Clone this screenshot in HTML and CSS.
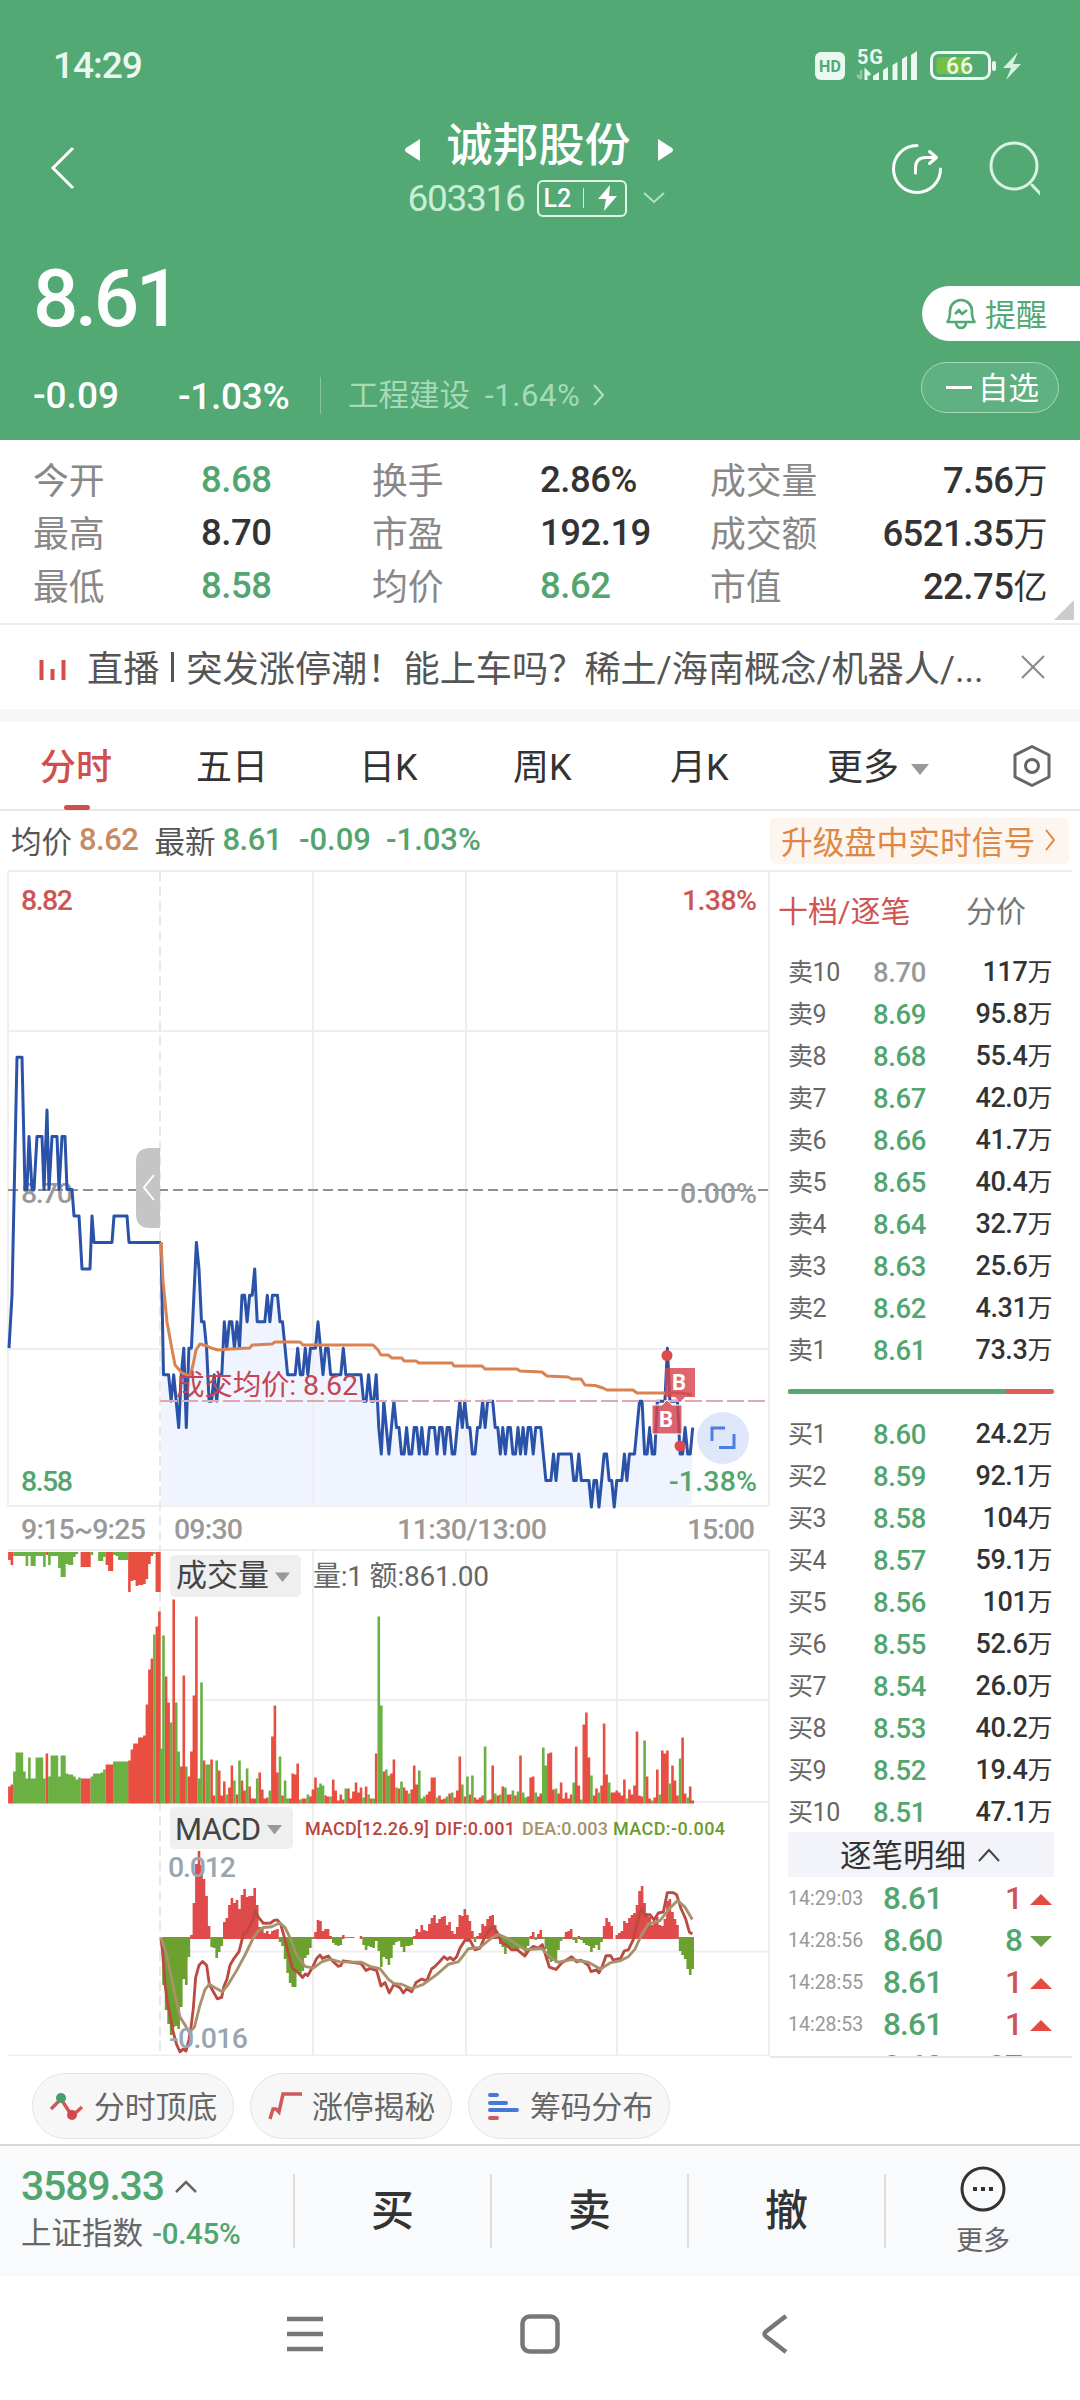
FILE: index.html
```html
<!DOCTYPE html>
<html lang="zh-CN">
<head>
    <meta charset="UTF-8">
    <meta name="viewport" content="width=device-width, initial-scale=1.0">
    <title>诚邦股份 603316</title>
    <link rel="stylesheet" href="styles.css">
</head>
<body>
    <header class="header">
        <div class="status-bar">
            <span class="clock">14:29</span>
            <svg class="status-icons" width="210" height="40" viewBox="0 -3 210 40">
                <rect x="0" y="3" width="30" height="28" rx="6" fill="#eaf8ef"/>
                <text x="4" y="22.5" class="hd" textLength="22">HD</text>
                <text x="42" y="15" class="net" textLength="26">5G</text>
                <path d="M46 21v9M46 30l-4-4" stroke="#8fcaa6" stroke-width="2.500" fill="none"/>
                <path d="M51 31v-9l4 4" stroke="#eaf8ef" stroke-width="3" fill="none"/>
                <path d="M58 31v-4l6-4v8zM68 31V21l5-3v13zM77.500 31V16l5-3v18zM87 31V10l5-3v24zM96 31V6l6-4v29z" fill="#eaf8ef"/>
                <rect x="116.500" y="3.500" width="58" height="26" rx="7" fill="none" stroke="#eaf8ef" stroke-width="3"/>
                <rect x="121.500" y="8" width="32" height="17" rx="3" fill="#74c043"/>
                <rect x="177" y="12" width="4" height="10" rx="2" fill="#eaf8ef"/>
                <text x="131" y="24.500" class="battery" textLength="27">66</text>
                <path d="M203 3 188 19h8l-5 12 15-16h-8z" fill="#d7f1e0"/>
            </svg>
        </div>

        <div class="title-bar">
            <svg class="back" width="30" height="46" viewBox="0 0 30 46"><path d="M25 3 5 23l20 20" fill="none" stroke="#fff" stroke-width="3"/></svg>
            <div class="title">
                <div class="title-name">
                    <svg width="17" height="24" viewBox="0 0 17 24"><path d="M16 1v22L2 14q-2-2 0-4z" fill="#fff"/></svg>
                    <span>诚邦股份</span>
                    <svg width="17" height="24" viewBox="0 0 17 24"><path d="M1 1v22l14-9q2-2 0-4z" fill="#fff"/></svg>
                </div>
                <div class="title-code">
                    <span class="code">603316</span>
                    <span class="level">L2<i></i><svg width="20" height="26" viewBox="0 0 20 26"><path d="M12 0 0 14h8L6 26l13-15h-8z" fill="#fff"/></svg></span>
                    <svg width="24" height="14" viewBox="0 0 24 14"><path d="m2 2 10 9L22 2" fill="none" stroke="#b5e0c4" stroke-width="2"/></svg>
                </div>
            </div>
            <svg class="tools" width="160" height="60" viewBox="0 0 160 60">
                <g fill="none" stroke-linecap="round" stroke-linejoin="round">
                    <path d="M37 7.500a23.500 23.500 0 1 0 23.500 23.500M35.500 35v-5q0-10.500 10.500-10.500h9.500M49.500 13.500l7 6-7 6" stroke="#fff" stroke-width="3"/>
                    <circle cx="134" cy="28" r="23" stroke="#d9f2e2" stroke-width="3"/>
                    <path d="m152 47 8.500 9" stroke="#d9f2e2" stroke-width="3"/>
                </g>
            </svg>
        </div>

        <div class="summary">
            <div>
                <div class="price">8.61</div>
                <div class="change">
                    <span class="change-value">-0.09</span>
                    <span class="change-rate">-1.03%</span>
                    <span class="sector">工程建设</span>
                    <span class="sector-rate">-1.64%</span>
                    <svg width="14" height="22" viewBox="0 0 14 22"><path d="m2 1 9 10-9 10" fill="none" stroke="#b5e0c4" stroke-width="2"/></svg>
                </div>
            </div>
            <div class="actions">
                <div class="remind">
                    <svg width="30" height="32" viewBox="0 0 30 32" fill="none" stroke="#52a974" stroke-width="2.600" stroke-linejoin="round"><path d="M4 16v-3a11 11 0 0 1 22 0v3q0 4 2.500 8H1.500Q4 20 4 16zM10 25q1 5 5 5t5-5M9 16l4-4 3 4 5-4"/></svg>
                    <span>提醒</span>
                </div>
                <div class="watch"><i></i><span>自选</span></div>
            </div>
        </div>
    </header>

    <section class="stats">
        <span class="label">今开</span><span class="down">8.68</span>
        <span class="label">换手</span><span>2.86%</span>
        <span class="label">成交量</span><span class="right">7.56<b>万</b></span>
        <span class="label">最高</span><span>8.70</span>
        <span class="label">市盈</span><span>192.19</span>
        <span class="label">成交额</span><span class="right">6521.35<b>万</b></span>
        <span class="label">最低</span><span class="down">8.58</span>
        <span class="label">均价</span><span class="down">8.62</span>
        <span class="label">市值</span><span class="right">22.75<b>亿</b></span>
    </section>

    <section class="news">
        <svg width="28" height="20" viewBox="0 0 28 20"><path d="M2.500 0v20M13.500 9v11M24.500 0v20" stroke="#d34d4d" stroke-width="4"/></svg>
        <p>直播 <i></i> 突发涨停潮！能上车吗？稀土/海南概念/机器人/...</p>
        <svg width="26" height="26" viewBox="0 0 26 26"><path d="m2 2 22 22M24 2 2 24" stroke="#8c8c8c" stroke-width="2.200"/></svg>
    </section>

    <nav class="tabs">
        <span class="tab active">分时</span>
        <span class="tab">五日</span>
        <span class="tab">日K</span>
        <span class="tab">周K</span>
        <span class="tab">月K</span>
        <span class="tab">更多<i class="caret"></i></span>
        <svg width="40" height="44" viewBox="0 0 40 44" fill="none" stroke="#666" stroke-width="3" stroke-linejoin="round"><path d="M20 2.500 37 11v22l-17 8.500L3 33V11z"/><circle cx="20" cy="22" r="6.500"/></svg>
    </nav>

    <div class="quote-line">
        <span>均价</span><span class="num avg">8.62</span>
        <span class="latest">最新</span><span class="num down">8.61</span>
        <span class="num down diff">-0.09</span><span class="num down rate">-1.03%</span>
        <div class="upgrade"><span>升级盘中实时信号</span><svg width="12" height="22" viewBox="0 0 12 22"><path d="m2 1 8 10-8 10" fill="none" stroke="#dd8844" stroke-width="2"/></svg></div>
    </div>

    <main class="market">
        <svg class="chart" width="770" height="1186" viewBox="0 870 770 1186">
            <!-- grid -->
            <g class="grid">
                <path d="M8 871H770M8 1031H769M8 1349H769M8 1506H769M8 871V1506M313 871V1506M466 871V1506M617 871V1506M769 871V1506"/>
                <path d="M8 1550H769M160 1700H769M466 1802H769M160 1951.500H769M313 1550V2055M466 1550V2055M617 1550V2055M769 1550V2055M8 2055.500H770"/>
                <path class="dashed" d="M160 871V2055"/>
            </g>

            <path id="area" fill="#eff4fe"/>
            <path class="grid" d="M313 1300V1506M466 1300V1506M617 1300V1506"/>
            <path d="M8 1190H769" stroke="#8f8f8f" stroke-width="2" stroke-dasharray="10 5"/>
            <text x="21" y="1203" class="axis" textLength="52">8.70</text>
            <text x="680" y="1203" class="axis" textLength="77">0.00%</text>
            <polyline id="preLine" class="price-line"/>
            <polyline id="priceLine" class="price-line"/>
            <path d="M160 1401H769" stroke="#dfa9af" stroke-width="2" stroke-dasharray="17 4"/>
            <polyline class="avg-line" points="161,1242 163,1281 167,1322 171,1344 175,1365 182,1373 190,1376 193,1365 196,1350 200,1344 207,1346 211,1348 218,1350 230,1349 250,1348 252,1345 272,1344 275,1342 300,1342 303,1345 373,1345 378,1350 381,1355 388,1355 392,1358 402,1358 404,1361 416,1361 419,1363 452,1363 454,1366 482,1366 485,1369 517,1369 520,1371 542,1372 547,1376 568,1377 572,1379 581,1379 585,1385 595,1385.500 603,1388 607,1390 633,1390 637,1393 682,1393 692,1395"/>

            <text x="21" y="910" class="axis up" textLength="52">8.82</text>
            <text x="682" y="910" class="axis up" textLength="75">1.38%</text>
            <text x="21" y="1491" class="axis down" textLength="52">8.58</text>
            <text x="669" y="1491" class="axis down" textLength="88">-1.38%</text>
            <text x="176" y="1395" class="cost" textLength="182">成交均价: 8.62</text>

            <!-- pre-open panel handle -->
            <path d="M160 1148h-10q-14 0-14 14v52q0 14 14 14h10z" fill="#c5c5c5"/>
            <path d="m154 1175-10 12.500 10 12.500" fill="none" stroke="#fff" stroke-width="2"/>

            <!-- buy markers -->
            <circle cx="667" cy="1355.500" r="5.500" fill="#dc4a4c"/>
            <circle cx="680" cy="1446" r="5.500" fill="#dc4a4c"/>
            <path d="M665 1368h30v29h-10l-5 5-5-5h-10z" fill="#d8444e" fill-opacity=".82"/>
            <path d="M652 1434v-29h10l5-5 5 5h10v29z" fill="#d8444e" fill-opacity=".82" stroke="#fff" stroke-width="1"/>
            <text x="672" y="1390" class="mark">B</text>
            <text x="659" y="1427" class="mark">B</text>

            <circle cx="723" cy="1438" r="26" fill="#dfe7fb"/>
            <path d="M712 1441v-13h13M734 1434v13.500h-15" fill="none" stroke="#4e7fe0" stroke-width="3"/>

            <text x="21" y="1539" class="axis" textLength="125">9:15~9:25</text>
            <text x="174" y="1539" class="axis" textLength="69">09:30</text>
            <text x="397" y="1539" class="axis" textLength="150">11:30/13:00</text>
            <text x="687" y="1539" class="axis" textLength="68">15:00</text>

            <!-- volume -->
            <path id="preUp" class="bar-up"/>
            <path id="preDown" class="bar-down"/>
            <path id="volUp" class="bar-up"/>
            <path id="volDown" class="bar-down"/>
            <rect x="170" y="1555" width="131" height="42" rx="5" fill="#efefef"/>
            <text x="176" y="1586" class="picker" textLength="93">成交量</text>
            <path d="M275 1572.500h15l-7.500 9.500z" fill="#999"/>
            <text x="313" y="1586" class="volume-info" textLength="176">量:1 额:861.00</text>

            <!-- macd -->
            <path id="macdUp" class="bar-up macd"/>
            <path id="macdDown" class="bar-down macd"/>
            <g transform="translate(0 1540) scale(.33333 .34439)">
                <polyline class="dif" points="483,1155 488,1200 495,1290 503,1345 513,1395 520,1430 530,1465 540,1486 550,1478 558,1484 567,1450 573,1415 580,1360 587,1270 597,1235 608,1224 620,1235 628,1290 640,1312 652,1332 665,1328 672,1295 681,1275 690,1235 700,1218 717,1195 725,1165 732,1140 742,1138 750,1120 760,1100 766,1078 775,1095 790,1113 812,1112 822,1105 832,1103 842,1115 855,1160 865,1200 878,1245 893,1255 908,1270 916,1260 923,1265 938,1240 950,1215 960,1205 967,1215 985,1208 995,1220 1015,1238 1022,1236 1030,1222 1060,1227 1083,1230 1098,1250 1110,1244 1130,1250 1143,1295 1155,1285 1168,1315 1182,1290 1190,1295 1200,1300 1210,1315 1220,1303 1235,1312 1248,1285 1265,1275 1280,1280 1295,1245 1303,1240 1315,1228 1332,1210 1342,1218 1350,1212 1360,1220 1370,1210 1380,1185 1395,1162 1410,1162 1425,1190 1440,1185 1455,1150 1478,1122 1492,1140 1505,1170 1518,1175 1535,1190 1552,1190 1575,1208 1587,1190 1600,1180 1615,1185 1627,1175 1640,1215 1648,1240 1668,1247 1685,1228 1715,1210 1730,1225 1743,1220 1765,1235 1773,1253 1790,1248 1797,1257 1808,1235 1818,1207 1832,1207 1840,1220 1852,1217 1862,1215 1873,1193 1885,1190 1900,1160 1915,1100 1925,1070 1935,1090 1950,1088 1962,1103 1975,1083 1990,1080 2002,1024 2020,1024 2030,1030 2043,1070 2057,1100 2068,1138 2077,1144"/>
                <polyline class="dea" points="483,1155 497,1195 510,1250 525,1320 540,1385 553,1405 568,1430 583,1415 600,1350 615,1305 628,1290 645,1300 667,1312 685,1290 710,1250 735,1205 760,1155 775,1135 790,1125 815,1123 838,1112 855,1125 870,1155 890,1205 915,1238 940,1243 965,1225 990,1217 1020,1225 1085,1226 1110,1238 1140,1245 1165,1275 1182,1288 1200,1290 1205,1290 1235,1303 1270,1290 1310,1262 1345,1232 1375,1225 1405,1187 1440,1183 1475,1155 1495,1145 1525,1158 1575,1190 1625,1186 1650,1210 1675,1226 1715,1218 1765,1226 1802,1246 1830,1228 1860,1222 1885,1210 1905,1188 1925,1145 1945,1115 1980,1105 2010,1068 2033,1047 2055,1066 2077,1102"/>
            </g>
            <rect x="170" y="1807" width="123" height="42" rx="5" fill="#efefef"/>
            <text x="175" y="1840" class="picker" textLength="86">MACD</text>
            <path d="M267 1825h15l-7.500 9.500z" fill="#999"/>
            <text x="305" y="1835" class="legend" fill="#b8463f" textLength="124">MACD[12.26.9]</text>
            <text x="435" y="1835" class="legend" fill="#b8463f" textLength="80">DIF:0.001</text>
            <text x="522" y="1835" class="legend" fill="#a5916b" textLength="86">DEA:0.003</text>
            <text x="613" y="1835" class="legend" fill="#6b9b2f" textLength="112">MACD:-0.004</text>
            <text x="168" y="1877" class="scale" textLength="68">0.012</text>
            <text x="169" y="2048" class="scale" textLength="79">-0.016</text>
        </svg>

        <aside class="book">
            <div class="book-tabs"><span class="active">十档/逐笔</span><span>分价</span></div>
            <div id="asks"></div>
            <div class="ratio"><i></i></div>
            <div id="bids"></div>
            <div class="detail-title"><span>逐笔明细</span><svg width="22" height="14" viewBox="0 0 22 14"><path d="m1 13 10-11 10 11" fill="none" stroke="#444" stroke-width="2"/></svg></div>
            <div id="ticks"></div>
        </aside>
    </main>

    <div class="chips">
        <div class="chip">
            <svg width="36" height="30" viewBox="0 0 36 30"><path d="m2 18 10-10 11 17 10-9" fill="none" stroke="#d2595b" stroke-width="3.500"/><circle cx="12" cy="7" r="5" fill="#459f68"/><circle cx="23" cy="24" r="5" fill="#d2494b"/></svg>
            <span>分时顶底</span>
        </div>
        <div class="chip">
            <svg width="36" height="30" viewBox="0 0 36 30"><path d="M3 28 6 18h3l3 3L16 3h19" fill="none" stroke="#d2595b" stroke-width="3.500"/></svg>
            <span>涨停揭秘</span>
        </div>
        <div class="chip">
            <svg width="36" height="30" viewBox="0 0 36 30" stroke-width="4" stroke-linecap="round"><path d="M5 4h7M5 12h16M5 19h27" stroke="#4777d9"/><path d="M5 27h7" stroke="#d2595b"/></svg>
            <span>筹码分布</span>
        </div>
    </div>

    <footer class="trade-bar">
        <div class="index">
            <div class="index-value">3589.33<svg width="24" height="14" viewBox="0 0 24 14"><path d="m2 12 10-10 10 10" fill="none" stroke="#666" stroke-width="2.500"/></svg></div>
            <div class="index-name">上证指数<span>-0.45%</span></div>
        </div>
        <div class="trade">买</div>
        <div class="trade">卖</div>
        <div class="trade">撤</div>
        <div class="more">
            <svg width="48" height="48" viewBox="0 0 48 48"><circle cx="24" cy="24" r="21" fill="none" stroke="#333" stroke-width="3"/><path d="M14 24h4M22 24h4M30 24h4" stroke="#333" stroke-width="4"/></svg>
            <span>更多</span>
        </div>
    </footer>

    <div class="system-nav">
        <svg width="36" height="36" viewBox="0 0 36 36"><path d="M0 3h36M0 18h36M0 33h36" stroke="#777" stroke-width="4.500"/></svg>
        <svg width="40" height="40" viewBox="0 0 40 40"><rect x="2.500" y="2.500" width="35" height="35" rx="7" fill="none" stroke="#777" stroke-width="4.500"/></svg>
        <svg width="28" height="40" viewBox="0 0 28 40"><path d="M25 2 5 17.500q-3 2.500 0 5L25 38" fill="none" stroke="#777" stroke-width="4.500"/></svg>
    </div>

    <script>
        // Minute prices in cents above 8.00
        var prices = [
            68,63,63,63,62,63,62,61,63,64,61,64,64,66,68,67,65,65,64,62,62,63,62,63,63,65,64,65,65,64,
            65,64,66,66,65,66,66,67,65,65,65,65,66,65,66,66,66,65,65,64,63,63,63,63,64,63,63,64,63,64,
            64,64,65,64,63,64,64,63,63,63,63,63,64,63,63,63,63,63,63,63,62,62,63,62,62,63,61,60,62,61,
            60,61,62,61,61,60,60,61,60,60,61,61,60,61,60,60,61,61,61,60,61,61,60,61,61,60,60,61,62,61,
            62,61,61,60,60,61,61,62,61,62,62,62,61,61,60,61,60,61,61,60,60,61,60,61,60,61,61,60,61,61,
            61,60,59,59,59,60,59,60,60,60,60,60,60,59,59,60,59,59,59,59,58,59,59,58,59,60,60,59,59,58,
            59,59,59,60,59,60,60,60,61,62,62,60,60,61,60,60,62,62,62,62,64,62,62,62,62,60,60,61,60,60,61
        ];
        // Call auction: x, price
        var auction = [
            [9,64],[12,66],[17,75],[22,75],[25,70],[27,70],[29,72],[32,70],[34,70],[37,72],[42,72],[44,70],
            [47,73],[49,70],[52,72],[57,72],[59,70],[62,72],[65,72],[67,70],[72,70],[74,69],[79,69],[82,67],
            [90,67],[92,69],[94,68],[112,68],[114,69],[127,69],[129,68],[161,68]
        ];
        // Bars: positive is red, negative is green
        var auctionVolume = [
            17,19,-32,-51,-51,-51,-32,-25,-46,-25,-25,-46,-46,-46,-25,50,-27,-48,-48,-48,-27,-48,-48,-30,-29,-29,-27,-24,-26,
            25,25,25,25,-27,-30,-30,-30,-31,-34,39,39,39,-42,-42,-42,-42,-42,-42,43,54,60,60,66,66,68,99,134,145,-169,177,192
        ];
        var auctionUnmatched = [
            8,13,-4,-4,-4,-4,-4,-14,-4,-14,-14,-4,-4,-4,-15,3,-13,-4,-4,-4,-16,-25,-25,-12,-13,-13,-5,-2,0,
            15,15,15,15,-3,0,0,-9,-9,-5,13,19,19,-3,-4,-8,-8,-8,-8,40,29,28,34,33,33,32,27,12,4,-2,40,40
        ];
        var volume = [
            -55,-168,127,101,-81,204,-101,-52,37,128,-37,27,52,108,187,-25,-121,43,-39,-39,44,8,-43,33,8,22,-9,16,38,-23,
            9,-43,23,13,-35,17,5,5,-25,31,14,5,6,-13,67,98,31,-47,8,-23,-5,5,30,29,40,-4,5,5,-9,7,
            14,26,-16,-20,-18,8,7,-7,24,13,3,9,4,-15,15,5,12,21,11,16,-6,17,-9,5,-5,50,-187,-98,32,-34,
            -28,30,44,-16,15,-22,16,13,-10,14,38,19,-33,-5,-7,9,12,26,26,-6,8,4,5,-7,10,-11,6,13,47,-19,
            7,-27,9,-28,6,4,6,8,-57,3,4,38,-10,8,-9,17,-16,9,9,-13,8,-12,48,-11,-6,7,26,27,-11,7,
            10,-56,-38,50,51,14,-15,10,21,5,11,5,9,-21,57,18,-4,79,91,46,-28,8,15,-11,18,80,29,-21,11,11,
            13,11,8,24,-5,14,9,18,72,8,7,-63,27,5,-3,6,34,-9,53,50,53,-20,38,23,8,-45,66,10,-6,17,3
        ];
        var macd = [
            0,-48,-73,-87,-98,-90,-89,-92,-70,-42,-48,-20,4,36,75,88,74,60,43,13,-10,-11,-21,-15,-9,17,21,34,41,36,
            39,30,44,50,42,43,43,51,34,12,10,6,8,5,8,9,10,-5,-9,-22,-36,-46,-50,-50,-34,-38,-34,-21,-18,-11,
            -2,7,19,18,8,10,10,3,-6,-8,-9,-8,4,-1,-1,-1,-1,0,0,3,-8,-13,-9,-10,-11,-4,-14,-30,-20,-22,
            -28,-21,-8,-5,-4,-10,-15,-9,-9,-8,3,10,7,14,9,8,15,21,24,16,20,22,23,14,17,8,5,12,24,23,
            30,24,18,8,-5,3,6,15,13,20,23,24,14,5,-7,-10,-17,-10,-12,-14,-12,-14,-11,-12,-17,-9,3,7,-3,5,
            9,-2,-12,-22,-25,-24,-26,-13,-4,2,7,8,10,-3,-6,3,-3,-6,-8,-9,-15,-11,-8,-13,-5,13,21,17,13,0,
            4,6,8,18,16,21,24,26,34,48,53,36,26,22,14,16,22,14,13,20,38,40,27,20,14,-14,-18,-22,-32,-38,-32
        ];

        function priceY(cents) {
            return 1507 - (cents - 58) * 26.46;
        }

        function minuteX(i) {
            return 161 + i * 2.532;
        }

        function auctionX(i) {
            return 9.4 + i * 2.5;
        }

        // One path holds all the bars of a colour
        function bars(values, x, base, dir, sign) {
            var d = '';
            values.forEach(function(v, i) {
                if (v * sign > 0) {
                    d += 'M' + x(i).toFixed(1) + ' ' + base + 'v' + (dir * Math.abs(v));
                }
            });
            return d;
        }

        function setPath(id, d) {
            document.getElementById(id).setAttribute('d', d);
        }

        var points = prices.map(function(p, i) {
            return minuteX(i).toFixed(1) + ',' + priceY(p).toFixed(1);
        });
        document.getElementById('priceLine').setAttribute('points', points.join(' '));
        document.getElementById('preLine').setAttribute('points', auction.map(function(p) {
            return p[0] + ',' + priceY(p[1]).toFixed(1);
        }).join(' '));
        setPath('area', 'M161 1506L' + points.join(' ') + ' 692 1506z');

        setPath('preUp', bars(auctionVolume, auctionX, 1803.5, -1, 1) + bars(auctionUnmatched, auctionX, 1552, 1, 1));
        setPath('preDown', bars(auctionVolume, auctionX, 1803.5, -1, -1) + bars(auctionUnmatched, auctionX, 1552, 1, -1));
        setPath('volUp', bars(volume, minuteX, 1803.5, -1, 1));
        setPath('volDown', bars(volume, minuteX, 1803.5, -1, -1));
        setPath('macdUp', bars(macd, minuteX, 1939, -1, 1));
        setPath('macdDown', bars(macd, minuteX, 1937, 1, -1));

        // Order book
        var asks = [['卖10','8.70','117'],['卖9','8.69','95.8'],['卖8','8.68','55.4'],['卖7','8.67','42.0'],['卖6','8.66','41.7'],
            ['卖5','8.65','40.4'],['卖4','8.64','32.7'],['卖3','8.63','25.6'],['卖2','8.62','4.31'],['卖1','8.61','73.3']];
        var bids = [['买1','8.60','24.2'],['买2','8.59','92.1'],['买3','8.58','104'],['买4','8.57','59.1'],['买5','8.56','101'],
            ['买6','8.55','52.6'],['买7','8.54','26.0'],['买8','8.53','40.2'],['买9','8.52','19.4'],['买10','8.51','47.1']];
        var ticks = [['14:29:03','8.61','1','up'],['14:28:56','8.60','8','down'],['14:28:55','8.61','1','up'],
            ['14:28:53','8.61','1','up'],['','8.60','27','down']];

        function levelRows(levels) {
            return levels.map(function(l) {
                var cls = l[1] === '8.70' ? 'flat' : 'down';
                return '<div class="level-row"><span class="level-name">' + l[0] + '</span><span class="' + cls + '">' + l[1] +
                    '</span><span class="qty">' + l[2] + '<b>万</b></span></div>';
            }).join('');
        }

        document.getElementById('asks').innerHTML = levelRows(asks);
        document.getElementById('bids').innerHTML = levelRows(bids);
        document.getElementById('ticks').innerHTML = ticks.map(function(t) {
            return '<div class="tick-row"><span class="time">' + t[0] + '</span><span class="down">' + t[1] +
                '</span><span class="tick-qty ' + t[3] + '">' + t[2] + '</span><i class="arrow-' + t[3] + '"></i></div>';
        }).join('');
    </script>
</body>
</html>
```
FILE: styles.css
```css
* {
    box-sizing: border-box;
}
body {
    margin: 0;
    width: 1080px;
    height: 2400px;
    overflow: hidden;
    background-color: #fff;
    color: #333;
    font-family: Roboto, 'Noto Sans CJK SC', sans-serif;
    white-space: nowrap;
}
svg {
    display: block;
    flex: none;
}
i {
    font-style: normal;
}
b {
    font-weight: 400;
}
.up {
    color: #cc5555;
    fill: #cc5555;
}
.down {
    color: #52a56f;
    fill: #52a56f;
}

/* Header */
.header {
    height: 440px;
    background-color: #52a974;
    color: #fff;
}
.status-bar {
    display: flex;
    justify-content: space-between;
    align-items: center;
    height: 108px;
    padding: 23px 55px 0 53px;
}
.clock {
    font-size: 37px;
    font-weight: 500;
    letter-spacing: -1px;
    color: #eaf8ef;
}
.hd {
    font-size: 16px;
    font-weight: 700;
    fill: #52a974;
}
.net {
    font-size: 20px;
    font-weight: 700;
    fill: #eaf8ef;
}
.battery {
    font-size: 23px;
    font-weight: 500;
    fill: #eaf8ef;
}
.title-bar {
    display: flex;
    justify-content: space-between;
    align-items: center;
    height: 120px;
    padding: 0 40px 0 48px;
}
.title-bar .back {
    margin-right: 119px;
}
.title-name {
    display: flex;
    justify-content: center;
    align-items: center;
    gap: 26px;
    height: 58px;
    font-size: 46px;
}
.title-name span {
    margin-top: -4px;
    font-weight: 500;
}
.title-name svg {
    margin-top: 14px;
}
.title-code {
    display: flex;
    align-items: center;
    height: 50px;
    padding: 2px 0 0 2px;
}
.code {
    width: 131px;
    padding-left: 2px;
    font-size: 37px;
    letter-spacing: -1.3px;
    color: #c9eed6;
}
.level {
    display: flex;
    align-items: center;
    width: 90px;
    height: 37px;
    margin-right: 15px;
    padding-left: 5px;
    border: 2px solid #e0f5e8;
    border-radius: 6px;
    font-size: 25px;
    font-weight: 500;
}
.level i {
    width: 1px;
    height: 20px;
    margin: 0 14px 0 12px;
    background-color: #d0eedb;
}
.summary {
    display: flex;
    justify-content: space-between;
    padding-left: 33px;
}
.price {
    height: 140px;
    font-size: 80px;
    line-height: 142px;
    font-weight: 500;
    letter-spacing: -3.5px;
}
.change {
    display: flex;
    align-items: center;
    height: 54px;
}
.change-value, .change-rate {
    font-size: 37px;
    font-weight: 500;
}
.change-value {
    width: 145px;
}
.change-rate {
    width: 143px;
    height: 37px;
    line-height: 39px;
    letter-spacing: -0.3px;
    border-right: 1px solid #86c49e;
}
.sector {
    margin: -4px 0 0 27px;
    font-size: 30.5px;
    color: #a6dab8;
}
.sector-rate {
    width: 107px;
    margin: 0 0 0 15px;
    font-size: 31px;
    letter-spacing: 0.6px;
    color: #a6dab8;
}
.actions {
    width: 159px;
    padding-top: 58px;
}
.remind {
    display: flex;
    align-items: center;
    gap: 9px;
    height: 55px;
    margin-left: 1px;
    padding-left: 24px;
    border-radius: 28px 0 0 28px;
    background-color: #fff;
    font-size: 31px;
    color: #52a974;
}
.remind span, .watch span {
    padding-bottom: 3px;
}
.watch {
    display: flex;
    align-items: center;
    gap: 6px;
    width: 138px;
    height: 51px;
    margin-top: 21px;
    padding-left: 24px;
    border: 1px solid #a6dab8;
    border-radius: 26px;
    background-color: #60b181;
    font-size: 30.5px;
}
.watch i {
    width: 26px;
    height: 3px;
    background-color: #fff;
}

/* Key figures */
.stats {
    position: relative;
    display: grid;
    grid-template-columns: 168px 171px 168px 170px 140px 197px;
    grid-auto-rows: 53px;
    align-items: center;
    height: 185px;
    padding: 13px 33px 0;
    border-bottom: 2px solid #eee;
    font-size: 36.5px;
    font-weight: 500;
    letter-spacing: -0.5px;
}
.stats .label {
    padding-bottom: 4px;
    font-size: 35.8px;
    font-weight: 400;
    letter-spacing: 0;
    color: #888;
}
.stats b {
    font-size: 34px;
}
.stats .right {
    padding-bottom: 2px;
    text-align: right;
}
.stats::after {
    content: '';
    position: absolute;
    right: 6px;
    bottom: 3px;
    border: 10px solid transparent;
    border-right-color: #ccc;
    border-bottom-color: #ccc;
}
.news {
    display: flex;
    align-items: center;
    height: 97px;
    padding: 0 34px 0 39px;
    border-bottom: 13px solid #f7f7f7;
}
.news svg:first-child {
    margin-top: 6px;
}
.news p {
    flex: 1;
    margin: 0;
    padding: 0 0 2px 20px;
    font-size: 36.2px;
    color: #555;
}
.news i {
    display: inline-block;
    width: 3px;
    height: 30px;
    margin: 0 3px;
    background-color: #555;
}

/* Chart tabs */
.tabs {
    display: grid;
    grid-template-columns: 156px 163px 154px 157px 157px 185px 40px;
    align-items: center;
    height: 89px;
    padding-left: 40px;
    border-bottom: 2px solid #e8e8e8;
    font-size: 36px;
}
.tab {
    position: relative;
    padding-bottom: 4px;
}
.tab.active {
    font-weight: 500;
    color: #cf4e50;
}
.tab.active::after {
    content: '';
    position: absolute;
    left: 24px;
    bottom: -16px;
    width: 26px;
    height: 5px;
    border-radius: 3px;
    background-color: #cf4e50;
}
.caret {
    display: inline-block;
    margin: 0 0 5px 12px;
    border: 9px solid transparent;
    border-top: 11px solid #999;
    border-bottom: 0;
}
.quote-line {
    display: flex;
    align-items: center;
    height: 59px;
    padding: 0 0 2px 11px;
    font-size: 30.5px;
    color: #555;
}
.quote-line .num {
    margin: 0 0 0 7px;
    font-size: 31px;
    font-weight: 500;
    letter-spacing: -0.5px;
}
.quote-line .avg {
    color: #c98a60;
}
.quote-line .latest {
    margin-left: 16px;
}
.quote-line .diff {
    margin-left: 17px;
    letter-spacing: 0;
}
.quote-line .rate {
    margin-left: 15px;
    letter-spacing: 0;
}
.upgrade {
    display: flex;
    align-items: center;
    gap: 9px;
    width: 299px;
    height: 46px;
    margin: 2px 11px 0 auto;
    padding: 0 0 2px 11px;
    border-radius: 5px;
    background-color: #fdf5ef;
    font-size: 31.8px;
    color: #dd8844;
}

/* Charts */
.market {
    display: flex;
    height: 1188px;
}
.grid {
    fill: none;
    stroke: #eee;
    stroke-width: 2;
}
.grid .dashed {
    stroke: #e8e8e8;
    stroke-dasharray: 10 5;
}
.price-line {
    fill: none;
    stroke: #2a52a8;
    stroke-width: 3;
    stroke-linejoin: round;
}
.avg-line {
    fill: none;
    stroke: #d98252;
    stroke-width: 3;
    stroke-linejoin: round;
}
.axis {
    font-size: 28.5px;
    font-weight: 500;
    fill: #999;
}
.axis.up {
    fill: #cc5555;
}
.axis.down {
    fill: #52a56f;
}
.cost {
    font-size: 28.5px;
    fill: #c4454f;
}
.mark {
    font-size: 22px;
    font-weight: 700;
    fill: #fff;
}
.bar-up, .bar-down {
    fill: none;
    stroke-width: 2.6;
}
.bar-up {
    stroke: #e84f40;
}
.bar-down {
    stroke: #6ab043;
}
.bar-up.macd {
    stroke: #df4b4b;
}
.bar-down.macd {
    stroke: #6ca02f;
}
.dif, .dea {
    fill: none;
    stroke-width: 8.5;
    stroke-linejoin: round;
}
.dif {
    stroke: #bb4a42;
}
.dea {
    stroke: #a8926c;
}
.picker {
    font-size: 31px;
    fill: #444;
}
.volume-info {
    font-size: 28px;
    fill: #666;
}
.legend {
    font-size: 18px;
    font-weight: 500;
}
.scale {
    font-size: 28.5px;
    font-weight: 500;
    fill: #98a5b3;
}

/* Order book */
.book {
    width: 302px;
    height: 1188px;
    border-top: 2px solid #eee;
    border-bottom: 2px solid #e8e8e8;
    padding: 0 18px;
    overflow: hidden;
}
.book-tabs {
    display: flex;
    align-items: center;
    justify-content: space-between;
    height: 79px;
    margin: 0 28px 0 -10px;
    padding-bottom: 5px;
    font-size: 30px;
    color: #777;
}
.book-tabs .active {
    color: #cf5553;
}
.level-row {
    display: grid;
    grid-template-columns: 85px 70px 109px;
    align-items: center;
    height: 42px;
    font-size: 27.5px;
    font-weight: 500;
    line-height: 42px;
    letter-spacing: -0.4px;
}
.level-name {
    font-size: 25px;
    font-weight: 400;
    color: #666;
}
.level-row .flat {
    color: #999;
}
.level-row .qty {
    text-align: right;
    font-size: 27px;
}
.level-row b {
    font-size: 25px;
}
.ratio {
    height: 5px;
    margin: 18px 0 19px;
    border-radius: 3px;
    background-color: #dc5c56;
    overflow: hidden;
}
.ratio i {
    display: block;
    width: 82%;
    height: 5px;
    background-color: #55a873;
}
.detail-title {
    display: flex;
    align-items: center;
    gap: 12px;
    height: 45px;
    margin: -1px 0 1px;
    padding-left: 52px;
    background-color: #f3f4f9;
    font-size: 31.5px;
    color: #333;
}
.detail-title span {
    padding-bottom: 3px;
}
.tick-row {
    display: grid;
    grid-template-columns: 95px 70px 69px 1fr;
    align-items: center;
    height: 42px;
    font-size: 31.5px;
    font-weight: 500;
    line-height: 42px;
    letter-spacing: -0.8px;
}
.tick-row .time {
    font-size: 19.5px;
    font-weight: 400;
    letter-spacing: 0;
    color: #999;
}
.tick-qty {
    text-align: right;
}
.arrow-up, .arrow-down {
    justify-self: end;
    margin-right: 2px;
    border: 11px solid transparent;
}
.arrow-up {
    border-top: 0;
    border-bottom-color: #e34a41;
}
.arrow-down {
    border-bottom: 0;
    border-top-color: #6ca04a;
}

.chips {
    display: flex;
    gap: 16px;
    height: 86px;
    padding: 15px 32px 0;
}
.chip {
    display: flex;
    align-items: center;
    gap: 9px;
    width: 202px;
    height: 66px;
    padding-left: 16px;
    border: 1px solid #e4e4e4;
    border-radius: 33px;
    background-color: #f7f7f7;
    font-size: 30.8px;
    color: #666;
}
.chip span {
    padding-bottom: 4px;
}

/* Bottom bar */
.trade-bar {
    display: flex;
    align-items: center;
    height: 132px;
    border-top: 2px solid #d8d8d8;
    background-color: #f9fafc;
}
.index {
    width: 293px;
    padding-left: 21px;
}
.index-value {
    display: flex;
    align-items: center;
    gap: 10px;
    height: 44px;
    margin-top: -2px;
    font-size: 41px;
    font-weight: 500;
    letter-spacing: -1.2px;
    color: #52a56f;
}
.index-value svg {
    margin-top: 2px;
}
.index-name {
    height: 48px;
    margin-top: 1px;
    font-size: 30.5px;
    line-height: 49px;
    color: #666;
}
.index-name span {
    margin-left: 9px;
    font-size: 29.5px;
    font-weight: 500;
    letter-spacing: -0.3px;
    color: #52a56f;
}
.trade {
    width: 197px;
    height: 74px;
    border-left: 2px solid #ddd;
    font-size: 43px;
    line-height: 74px;
    font-weight: 500;
    text-align: center;
}
.more {
    display: flex;
    flex-direction: column;
    align-items: center;
    flex: 1;
    height: 74px;
    border-left: 2px solid #ddd;
    font-size: 27px;
    color: #666;
}
.more svg {
    margin-top: -9px;
}
.more span {
    line-height: 46px;
    margin-top: 5px;
}
.system-nav {
    display: flex;
    align-items: center;
    height: 116px;
    padding-left: 287px;
}
.system-nav svg:nth-child(2) {
    margin: 0 201px 0 197px;
}
```
